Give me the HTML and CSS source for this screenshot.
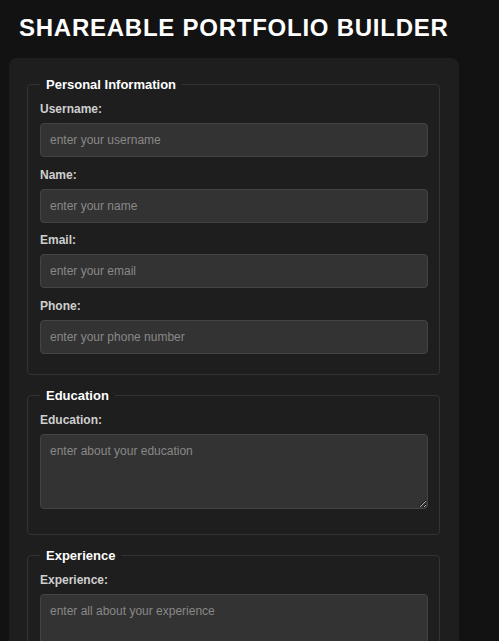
FILE: index.html
```html
<!DOCTYPE html>
<html lang="en">
<head>
<meta charset="utf-8">
<title>Shareable Portfolio Builder</title>
<link rel="stylesheet" href="styles.css">
</head>
<body>
<h1 class="title">SHAREABLE PORTFOLIO BUILDER</h1>
<form class="card">
  <fieldset class="group">
    <legend class="group-title">Personal Information</legend>
    <label class="field-label" for="username">Username:</label>
    <input class="field" id="username" type="text" placeholder="enter your username">
    <label class="field-label" for="name">Name:</label>
    <input class="field" id="name" type="text" placeholder="enter your name">
    <label class="field-label" for="email">Email:</label>
    <input class="field" id="email" type="email" placeholder="enter your email">
    <label class="field-label" for="phone">Phone:</label>
    <input class="field" id="phone" type="tel" placeholder="enter your phone number">
  </fieldset>
  <fieldset class="group">
    <legend class="group-title">Education</legend>
    <label class="field-label" for="education">Education:</label>
    <textarea class="field area" id="education" placeholder="enter about your education"></textarea>
  </fieldset>
  <fieldset class="group">
    <legend class="group-title">Experience</legend>
    <label class="field-label" for="experience">Experience:</label>
    <textarea class="field area" id="experience" placeholder="enter all about your experience"></textarea>
  </fieldset>
</form>
</body>
</html>
```
FILE: styles.css
```css
html, body {
  margin: 0;
  background: #121212;
  font-family: "Liberation Sans", Arial, sans-serif;
  color: #fff;
}
body {
  padding: 0 9px;
}
.title {
  margin: 14px 0 17px 10px;
  font-size: 24px;
  line-height: 27px;
  font-weight: bold;
  letter-spacing: 0.75px;
  color: #fff;
}
.card {
  width: 450px;
  box-sizing: border-box;
  background: #1e1e1e;
  border-radius: 8px;
  padding: 19px 19px 18px 18px;
}
.group {
  margin: 0 0 13px 0;
  border: 1px solid #333;
  border-radius: 4px;
  padding: 10px 11px 10px 12px;
  min-width: 0;
}
.group-title {
  padding: 0 6px;
  font-size: 13px;
  line-height: 15px;
  font-weight: bold;
  color: #fff;
  margin-left: 0;
}
.field-label {
  display: block;
  font-size: 12px;
  line-height: 14px;
  font-weight: bold;
  color: #cfcfcf;
  margin-bottom: 7px;
}
.field {
  display: block;
  width: 100%;
  box-sizing: border-box;
  height: 34px;
  margin: 0 0 10.5px 0;
  padding: 0 9px;
  background: #333;
  border: 1px solid #444;
  border-radius: 4px;
  font-family: "Liberation Sans", Arial, sans-serif;
  font-size: 12px;
  color: #eee;
  outline: none;
}
.field::placeholder {
  color: #888;
}
.area {
  height: 75px;
  padding: 9px;
  margin-bottom: 15px;
  resize: vertical;
}
```
